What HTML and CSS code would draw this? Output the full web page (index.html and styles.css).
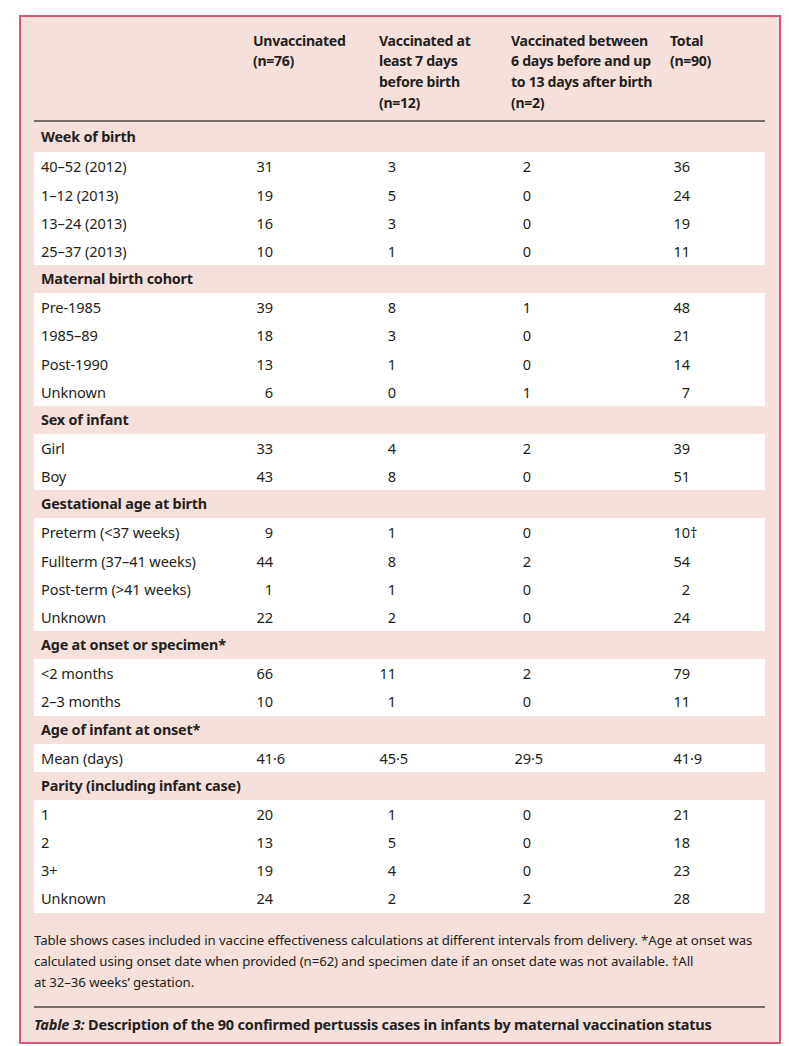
FILE: index.html
```html
<!DOCTYPE html>
<html lang="en">
<head>
<meta charset="utf-8">
<title>Table 3</title>
<link rel="stylesheet" href="styles.css">
</head>
<body>
<div class="panel">
  <table class="data">
    <colgroup>
      <col class="c1"><col class="c2"><col class="c3"><col class="c4"><col class="c5">
    </colgroup>
    <thead>
      <tr class="head">
        <th></th>
        <th>Unvaccinated<br>(n=76)</th>
        <th>Vaccinated at<br>least 7 days<br>before birth<br>(n=12)</th>
        <th>Vaccinated between<br>6 days before and up<br>to 13 days after birth<br>(n=2)</th>
        <th>Total<br>(n=90)</th>
      </tr>
    </thead>
    <tbody>
      <tr class="sec first"><td colspan="5">Week of birth</td></tr>
      <tr class="row"><td class="lab">40–52 (2012)</td><td class="n n2"><span class="i">31</span></td><td class="n n3"><span class="i">3</span></td><td class="n n4"><span class="i">2</span></td><td class="n n5"><span class="i">36</span></td></tr>
      <tr class="row"><td class="lab">1–12 (2013)</td><td class="n n2"><span class="i">19</span></td><td class="n n3"><span class="i">5</span></td><td class="n n4"><span class="i">0</span></td><td class="n n5"><span class="i">24</span></td></tr>
      <tr class="row"><td class="lab">13–24 (2013)</td><td class="n n2"><span class="i">16</span></td><td class="n n3"><span class="i">3</span></td><td class="n n4"><span class="i">0</span></td><td class="n n5"><span class="i">19</span></td></tr>
      <tr class="row"><td class="lab">25–37 (2013)</td><td class="n n2"><span class="i">10</span></td><td class="n n3"><span class="i">1</span></td><td class="n n4"><span class="i">0</span></td><td class="n n5"><span class="i">11</span></td></tr>

      <tr class="sec"><td colspan="5">Maternal birth cohort</td></tr>
      <tr class="row"><td class="lab">Pre-1985</td><td class="n n2"><span class="i">39</span></td><td class="n n3"><span class="i">8</span></td><td class="n n4"><span class="i">1</span></td><td class="n n5"><span class="i">48</span></td></tr>
      <tr class="row"><td class="lab">1985–89</td><td class="n n2"><span class="i">18</span></td><td class="n n3"><span class="i">3</span></td><td class="n n4"><span class="i">0</span></td><td class="n n5"><span class="i">21</span></td></tr>
      <tr class="row"><td class="lab">Post-1990</td><td class="n n2"><span class="i">13</span></td><td class="n n3"><span class="i">1</span></td><td class="n n4"><span class="i">0</span></td><td class="n n5"><span class="i">14</span></td></tr>
      <tr class="row"><td class="lab">Unknown</td><td class="n n2"><span class="i">6</span></td><td class="n n3"><span class="i">0</span></td><td class="n n4"><span class="i">1</span></td><td class="n n5"><span class="i">7</span></td></tr>

      <tr class="sec"><td colspan="5">Sex of infant</td></tr>
      <tr class="row"><td class="lab">Girl</td><td class="n n2"><span class="i">33</span></td><td class="n n3"><span class="i">4</span></td><td class="n n4"><span class="i">2</span></td><td class="n n5"><span class="i">39</span></td></tr>
      <tr class="row"><td class="lab">Boy</td><td class="n n2"><span class="i">43</span></td><td class="n n3"><span class="i">8</span></td><td class="n n4"><span class="i">0</span></td><td class="n n5"><span class="i">51</span></td></tr>

      <tr class="sec"><td colspan="5">Gestational age at birth</td></tr>
      <tr class="row"><td class="lab">Preterm (&lt;37 weeks)</td><td class="n n2"><span class="i">9</span></td><td class="n n3"><span class="i">1</span></td><td class="n n4"><span class="i">0</span></td><td class="n n5"><span class="i">10</span>†</td></tr>
      <tr class="row"><td class="lab">Fullterm (37–41 weeks)</td><td class="n n2"><span class="i">44</span></td><td class="n n3"><span class="i">8</span></td><td class="n n4"><span class="i">2</span></td><td class="n n5"><span class="i">54</span></td></tr>
      <tr class="row"><td class="lab">Post-term (&gt;41 weeks)</td><td class="n n2"><span class="i">1</span></td><td class="n n3"><span class="i">1</span></td><td class="n n4"><span class="i">0</span></td><td class="n n5"><span class="i">2</span></td></tr>
      <tr class="row"><td class="lab">Unknown</td><td class="n n2"><span class="i">22</span></td><td class="n n3"><span class="i">2</span></td><td class="n n4"><span class="i">0</span></td><td class="n n5"><span class="i">24</span></td></tr>

      <tr class="sec"><td colspan="5">Age at onset or specimen*</td></tr>
      <tr class="row"><td class="lab">&lt;2 months</td><td class="n n2"><span class="i">66</span></td><td class="n n3"><span class="i">11</span></td><td class="n n4"><span class="i">2</span></td><td class="n n5"><span class="i">79</span></td></tr>
      <tr class="row"><td class="lab">2–3 months</td><td class="n n2"><span class="i">10</span></td><td class="n n3"><span class="i">1</span></td><td class="n n4"><span class="i">0</span></td><td class="n n5"><span class="i">11</span></td></tr>

      <tr class="sec"><td colspan="5">Age of infant at onset*</td></tr>
      <tr class="row"><td class="lab">Mean (days)</td><td class="n n2"><span class="i">41</span>·6</td><td class="n n3"><span class="i">45</span>·5</td><td class="n n4"><span class="i">29</span>·5</td><td class="n n5"><span class="i">41</span>·9</td></tr>

      <tr class="sec"><td colspan="5">Parity (including infant case)</td></tr>
      <tr class="row"><td class="lab">1</td><td class="n n2"><span class="i">20</span></td><td class="n n3"><span class="i">1</span></td><td class="n n4"><span class="i">0</span></td><td class="n n5"><span class="i">21</span></td></tr>
      <tr class="row"><td class="lab">2</td><td class="n n2"><span class="i">13</span></td><td class="n n3"><span class="i">5</span></td><td class="n n4"><span class="i">0</span></td><td class="n n5"><span class="i">18</span></td></tr>
      <tr class="row"><td class="lab">3+</td><td class="n n2"><span class="i">19</span></td><td class="n n3"><span class="i">4</span></td><td class="n n4"><span class="i">0</span></td><td class="n n5"><span class="i">23</span></td></tr>
      <tr class="row"><td class="lab">Unknown</td><td class="n n2"><span class="i">24</span></td><td class="n n3"><span class="i">2</span></td><td class="n n4"><span class="i">2</span></td><td class="n n5"><span class="i">28</span></td></tr>
    </tbody>
  </table>
  <p class="note">Table shows cases included in vaccine effectiveness calculations at different intervals from delivery. *Age at onset was<br>calculated using onset date when provided (n=62) and specimen date if an onset date was not available. †All<br>at 32–36 weeks’ gestation.</p>
  <p class="caption"><em>Table 3:</em> Description of the 90 confirmed pertussis cases in infants by maternal vaccination status</p>
</div>
</body>
</html>
```
FILE: styles.css
```css
html, body {
  margin: 0;
  padding: 0;
  background: #ffffff;
}
body {
  font-family: "Noto Sans", "Liberation Sans", Arial, sans-serif;
  color: #231f20;
}
.panel {
  margin: 15px 0 0 19px;
  border: 2px solid #d5587a;
  background: #f6e0dc;
  padding: 0 14px 0 13px;
  box-sizing: border-box;
  width: 762px;
  height: 1029px;
}
.data {
  border-collapse: collapse;
  table-layout: fixed;
  width: 731px;
}
.c1 { width: 219px; }
.c2 { width: 126px; }
.c3 { width: 132px; }
.c4 { width: 159px; }
.c5 { width: 95px; }
.data td, .data th {
  padding: 0;
}
.head th {
  text-align: left;
  vertical-align: top;
  font-weight: bold;
  font-size: 14.1px;
  line-height: 20.7px;
  padding: 13.6px 0 7px 0;
  border-bottom: 2px solid #776c69;
  letter-spacing: -0.3px;
  white-space: nowrap;
}
.sec td {
  font-weight: bold;
  font-size: 14.4px;
  height: 28.15px;
  line-height: 28.15px;
  padding-left: 7px;
  background: #f6e0dc;
  letter-spacing: -0.2px;
}
.sec.first td {
  height: 30px;
  line-height: 30px;
}
.row td {
  background: #ffffff;
  font-size: 14.6px;
  height: 28.15px;
  line-height: 28.15px;
  letter-spacing: -0.1px;
}
.row .lab {
  padding-left: 7px;
}
.i {
  display: inline-block;
  text-align: right;
  width: 20px;
}
.n3 .i { width: 17px; }
.note {
  margin: 17.5px 0 0 0;
  font-size: 13.25px;
  line-height: 21px;
  padding-bottom: 13px;
  border-bottom: 2px solid #776c69;
  width: 731px;
  letter-spacing: -0.1px;
  white-space: nowrap;
}
.caption {
  margin: 0;
  padding-top: 5.5px;
  font-size: 14.5px;
  line-height: 21px;
  font-weight: bold;
  letter-spacing: -0.2px;
}
.caption em {
  font-style: italic;
}
```
